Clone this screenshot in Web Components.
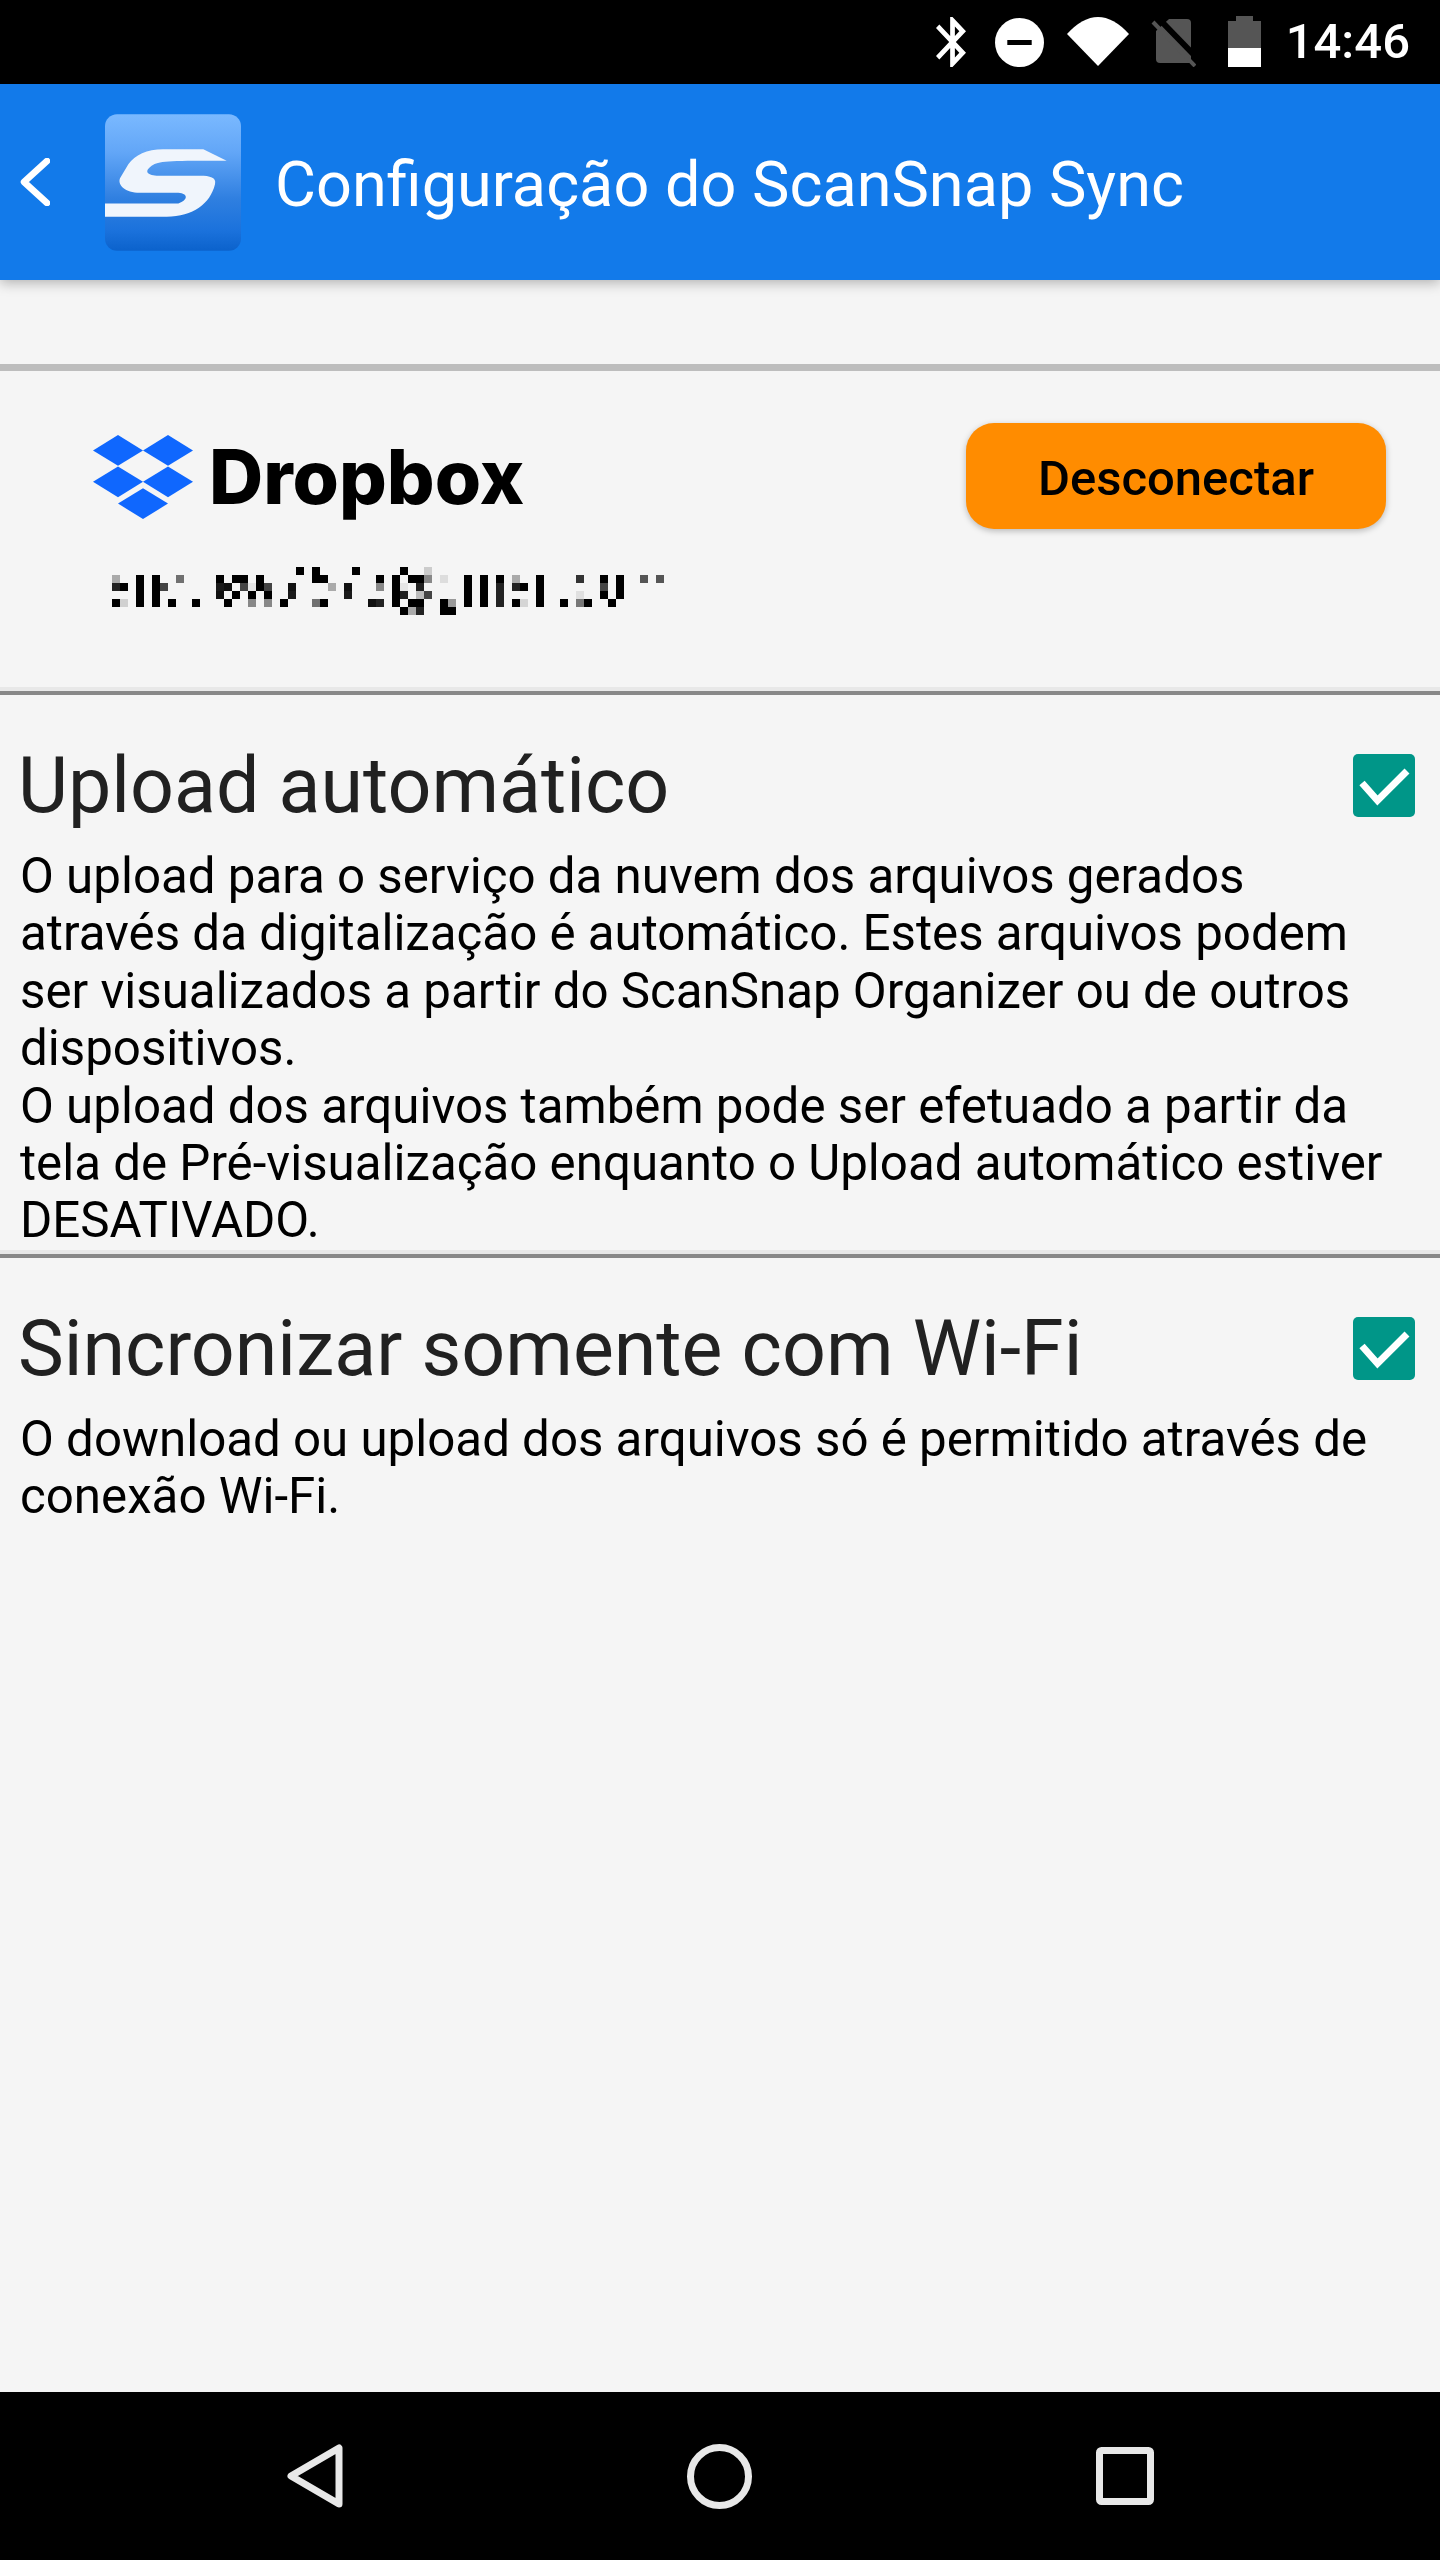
<!DOCTYPE html>
<html lang="pt-BR">
<head>
<meta charset="utf-8">
<title>Configuração do ScanSnap Sync</title>
<style>
  html, body { margin: 0; padding: 0; background: #f5f5f5; }
  body { font-family: Roboto, "Liberation Sans", sans-serif; }
  app-page { height: 2560px; }
</style>
</head>
<body>
<app-page>
  <status-bar slot="status" time="14:46"></status-bar>
  <app-bar slot="bar">Configuração do ScanSnap Sync</app-bar>
  <account-row></account-row>
  <setting-section heading="Upload automático">O upload para o serviço da nuvem dos arquivos gerados através da digitalização é automático. Estes arquivos podem ser visualizados a partir do ScanSnap Organizer ou de outros dispositivos.<br>O upload dos arquivos também pode ser efetuado a partir da tela de Pré-visualização enquanto o Upload automático estiver DESATIVADO.</setting-section>
  <setting-section heading="Sincronizar somente com Wi-Fi" last>O download ou upload dos arquivos só é permitido através de conexão Wi-Fi.</setting-section>
  <nav-bar slot="nav"></nav-bar>
</app-page>
<script>
function shadow(el, html) {
  el.attachShadow({ mode: 'open' }).innerHTML = html;
}

customElements.define('app-page', class extends HTMLElement {
  constructor() {
    super();
    shadow(this, `<style>
      :host { display: flex; flex-direction: column; width: 1440px; background: #f5f5f5; overflow: hidden; }
      main { flex: 1; display: flex; flex-direction: column; padding-top: 84px; }
      header { display: block; position: relative; z-index: 2; }
    </style>
    <header><slot name="status"></slot><slot name="bar"></slot></header>
    <main><slot></slot></main>
    <slot name="nav"></slot>`);
  }
});

customElements.define('status-bar', class extends HTMLElement {
  constructor() {
    super();
    const t = this.getAttribute('time');
    shadow(this, `<style>
      :host { display: flex; align-items: flex-start; justify-content: flex-end; height: 84px; background: #000; color: #fff; box-sizing: border-box; padding-right: 30px; font: 500 49px Roboto, sans-serif; }
      svg { display: block; flex: none; }
      time { margin: 13px 0 0 25px; line-height: 57px; }
    </style>
    <svg style="margin-top:17px" width="30" height="50" viewBox="5 2 12.71 20" preserveAspectRatio="none"><path fill="#fff" d="M17.71 7.71L12 2h-1v7.59L6.41 5 5 6.41 10.59 12 5 17.59 6.41 19 11 14.41V22h1l5.71-5.71-4.3-4.29 4.3-4.29zM13 5.83l1.88 1.88L13 9.59V5.83zm1.88 10.46L13 18.17v-3.76l1.88 1.88z"/></svg>
    <svg style="margin:18px 0 0 29px" width="49" height="49" viewBox="0 0 49 49"><circle cx="24.5" cy="24.5" r="24.5" fill="#fff"/><rect x="12.3" y="22" width="24.4" height="5" fill="#000"/></svg>
    <svg style="margin:17px 0 0 23px" width="62" height="49" viewBox="0 0 62 49"><path fill="#fff" d="M0 17Q31 -17 62 17L31 49Z"/></svg>
    <svg style="margin:19px 0 0 22px" width="45" height="48" viewBox="0 0 45 48"><path fill="#555" d="M18 0H36a4 4 0 0 1 4 4V44H9a4 4 0 0 1-4-4V12Z"/><path d="M9 1L47 40" stroke="#000" stroke-width="6" fill="none"/><path d="M2 3L44 47" stroke="#555" stroke-width="4" fill="none"/></svg>
    <svg style="margin:16px 0 0 32px" width="33" height="51" viewBox="0 0 33 51"><path fill="#555" d="M8 0H25V5H33V32H0V5H8Z"/><rect y="32" width="33" height="19" fill="#fff"/></svg>
    <time>${t}</time>`);
  }
});

customElements.define('app-bar', class extends HTMLElement {
  constructor() {
    super();
    shadow(this, `<style>
      :host { display: flex; align-items: center; height: 196px; background: #127aea; color: #fff; box-shadow: 0 3px 12px rgba(0,0,0,.28); font: 400 63px Roboto, sans-serif; white-space: nowrap; }
      svg { display: block; flex: none; }
      .back { margin-left: 20px; filter: blur(.5px); }
      .logo { margin-left: 55px; }
      span { margin: 5px 0 0 34px; }
    </style>
    <svg class="back" width="30" height="48" viewBox="0 0 30 48"><path d="M27 3L4 24L27 45" fill="none" stroke="#fff" stroke-width="6.5" stroke-linecap="round" stroke-linejoin="round"/></svg>
    <svg class="logo" width="136" height="137" viewBox="0 0 408 410">
      <defs><linearGradient id="g" x1="0" y1="0" x2="0" y2="1">
        <stop offset="0" stop-color="#7ab9ff"/><stop offset=".28" stop-color="#62a6f7"/><stop offset=".62" stop-color="#2f7fe0"/><stop offset=".85" stop-color="#1b72dc"/><stop offset="1" stop-color="#0b62cc"/>
      </linearGradient></defs>
      <rect width="408" height="410" rx="36" fill="url(#g)"/>
      <path transform="translate(-315 -100)" fill="#f0f5fc" d="M680 240L610 205H490C440 205 405 222 385 250L360 292C352 312 375 335 420 336H535C565 338 565 358 535 368H315V408H500C580 405 630 370 645 310C650 290 630 285 600 285H470C440 283 430 270 460 252C480 240 520 240 680 240Z"/>
    </svg>
    <span><slot></slot></span>`);
  }
});

const MOSAIC = [
 [0,23,'#000'],[0,25,'#000'],[0,30,'#000'],[0,36,'#000'],[0,39,'#ccc'],
 [1,0,'#aaa'],[1,3,'#000'],[1,5,'#000'],[1,8,'#707070'],[1,13,'#000'],[1,15,'#000'],[1,16,'#000'],[1,18,'#000'],[1,25,'#000'],[1,26,'#000'],[1,33,'#000'],[1,35,'#000'],[1,37,'#000'],[1,38,'#000'],[1,39,'#888'],[1,41,'#ddd'],[1,44,'#000'],[1,46,'#000'],[1,48,'#000'],[1,50,'#aaa'],[1,53,'#000'],[1,58,'#333'],[1,61,'#000'],[1,63,'#000'],[1,66,'#555'],[1,68,'#555'],
 [2,0,'#222'],[2,1,'#000'],[2,3,'#000'],[2,5,'#000'],[2,6,'#444'],[2,13,'#1a1a1a'],[2,14,'#111'],[2,16,'#444'],[2,17,'#e5e5e5'],[2,18,'#000'],[2,19,'#444'],[2,22,'#111'],[2,27,'#aaa'],[2,29,'#111'],[2,33,'#888'],[2,35,'#000'],[2,36,'#e5e5e5'],[2,38,'#222'],[2,44,'#000'],[2,46,'#000'],[2,48,'#222'],[2,50,'#222'],[2,51,'#000'],[2,53,'#000'],[2,61,'#444'],[2,63,'#000'],
 [3,3,'#000'],[3,5,'#000'],[3,13,'#111'],[3,15,'#000'],[3,17,'#000'],[3,19,'#000'],[3,22,'#1a1a1a'],[3,29,'#1a1a1a'],[3,35,'#000'],[3,36,'#222'],[3,38,'#bbb'],[3,39,'#444'],[3,44,'#000'],[3,46,'#000'],[3,48,'#222'],[3,53,'#000'],[3,58,'#e0e0e0'],[3,61,'#000'],[3,63,'#000'],
 [4,0,'#000'],[4,1,'#d0d0d0'],[4,3,'#000'],[4,5,'#000'],[4,7,'#000'],[4,10,'#000'],[4,14,'#000'],[4,17,'#888'],[4,19,'#888'],[4,21,'#000'],[4,25,'#707070'],[4,26,'#000'],[4,32,'#111'],[4,33,'#222'],[4,35,'#000'],[4,37,'#000'],[4,38,'#000'],[4,41,'#000'],[4,42,'#999'],[4,44,'#000'],[4,46,'#000'],[4,48,'#222'],[4,50,'#000'],[4,51,'#d5d5d5'],[4,53,'#000'],[4,56,'#000'],[4,58,'#777'],[4,59,'#000'],[4,62,'#000'],
 [5,36,'#000'],[5,37,'#aaa'],[5,38,'#222'],[5,41,'#000'],[5,42,'#000']
];

customElements.define('account-row', class extends HTMLElement {
  constructor() {
    super();
    const cells = MOSAIC.map(([r,c,f]) => `<rect x="${c*8}" y="${r*8}" width="8" height="8" fill="${f}"/>`).join('');
    const d = (x,y) => `<polygon points="${x-25},${y} ${x},${y-15.4} ${x+25},${y} ${x},${y+15.4}"/>`;
    shadow(this, `<style>
      :host { display: flex; justify-content: space-between; align-items: flex-start; box-sizing: border-box; border-top: 7px solid #bdbdbd; height: 323px; padding: 0 54px 0 93px; }
      .left { padding-top: 64px; }
      .brand { display: flex; align-items: center; height: 84px; }
      .word { margin-left: 16px; font: 800 75px Inter, Roboto, sans-serif; letter-spacing: 0; line-height: 84px; color: #000; }
      svg { display: block; flex: none; }
      .mosaic { margin: 48px 0 0 19px; shape-rendering: crispEdges; }
      button { all: unset; display: block; box-sizing: border-box; margin-top: 52px; padding-top: 3px; width: 420px; height: 106px; border-radius: 28px; background: #ff8c00; color: #000; font: 500 49px Roboto, sans-serif; text-align: center; line-height: 106px; box-shadow: 0 2px 6px rgba(0,0,0,.25); }
    </style>
    <div class="left">
      <div class="brand">
        <svg width="100" height="84" viewBox="0 0 100 84" fill="#0f67fe">${d(25,15.4)}${d(75,15.4)}${d(25,46.8)}${d(75,46.8)}${d(50,68.6)}</svg>
        <span class="word">Dropbox</span>
      </div>
      <svg class="mosaic" width="552" height="48" viewBox="0 0 552 48">${cells}</svg>
    </div>
    <button>Desconectar</button>`);
  }
});

customElements.define('setting-section', class extends HTMLElement {
  constructor() {
    super();
    const h = this.getAttribute('heading');
    shadow(this, `<style>
      :host { display: block; box-sizing: border-box; margin-top: 4px; padding: 46px 0 0; border-top: 4px solid #888; position: relative; }
      :host::before { content: ""; position: absolute; left: 0; right: 0; top: -8px; height: 4px; background: #e8e8e8; }
      .top { display: flex; justify-content: space-between; align-items: flex-start; padding: 0 25px 0 18px; }
      h2 { margin: 0; font: 400 77.1px Roboto, sans-serif; line-height: 90px; color: #212121; }
      .box { flex: none; width: 62px; height: 63px; margin-top: 13px; }
      p { margin: 17px 0 0; padding: 0 40px 0 20px; font: 400 49.25px Roboto, sans-serif; line-height: 57.4px; color: #000; }
      svg { display: block; }
    </style>
    <div class="top"><h2>${h}</h2>
      <svg class="box" viewBox="0 0 62 63"><rect width="62" height="63" rx="5" fill="#009688"/><path d="M9 29L24.5 46.5L54 17" fill="none" stroke="#fff" stroke-width="7"/></svg>
    </div>
    <p><slot></slot></p>`);
  }
});

customElements.define('nav-bar', class extends HTMLElement {
  constructor() {
    super();
    shadow(this, `<style>
      :host { display: flex; justify-content: center; align-items: center; gap: 344px; height: 168px; background: #000; }
      svg { display: block; flex: none; }
    </style>
    <svg width="56" height="64" viewBox="0 0 56 64"><path d="M52 4V60L4 32Z" fill="none" stroke="#e8e8e8" stroke-width="7" stroke-linejoin="round"/></svg>
    <svg width="65" height="65" viewBox="0 0 65 65"><circle cx="32.5" cy="32.5" r="29" fill="none" stroke="#e8e8e8" stroke-width="7"/></svg>
    <svg width="58" height="58" viewBox="0 0 58 58"><rect x="3.5" y="3.5" width="51" height="51" rx="2" fill="none" stroke="#e8e8e8" stroke-width="7"/></svg>`);
  }
});
</script>
</body>
</html>
